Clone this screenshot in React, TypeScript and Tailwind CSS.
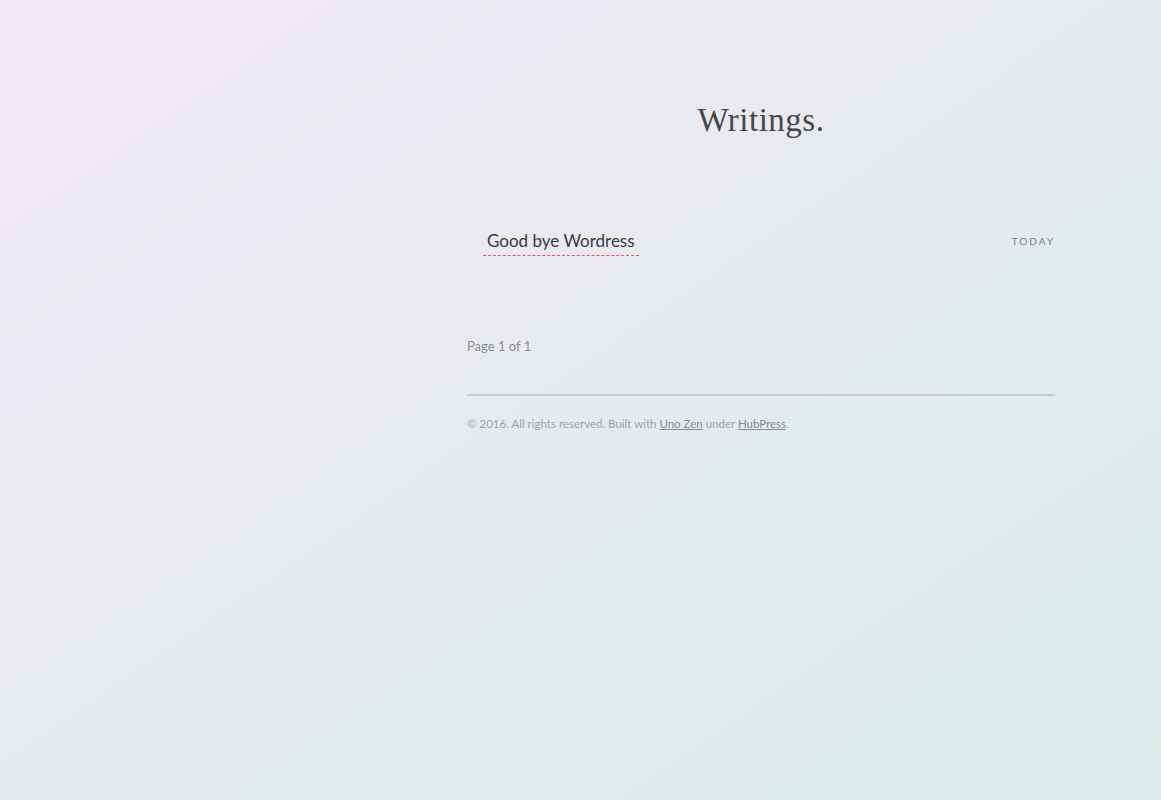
export default function App() {
  return (
    <div
      className="min-h-[800px] w-full bg-gradient-to-br from-[#f1e9f5] via-[#e6eaee] to-[#d9ebe8]"
      style={{ fontFamily: "Lato, 'Open Sans', sans-serif" }}
    >
      <div className="flex">
        {/* left side is empty */}
        <div className="w-[467px] shrink-0" />

        <main className="w-[588px] shrink-0">
          <header className="pt-[100px] pb-[90px] text-center">
            <h1
              className="text-[33px] font-normal leading-[40px] tracking-[0.5px] text-[#46464b]"
              style={{ fontFamily: "'Liberation Serif', serif" }}
            >
              Writings.
            </h1>
          </header>

          <ul>
            <li className="flex items-center justify-between">
              <a
                href="#"
                className="ml-4 border-b border-dashed border-b-[#e5535c] px-1 pb-[3px] text-[17px] leading-[22px] text-[#3a3a3f]"
              >
                Good bye Wordress
              </a>
              <span className="-mt-[3px] text-[10px] tracking-[2px] text-[#7a7d80]">TODAY</span>
            </li>
          </ul>

          <div className="mt-[81px] text-[13px] text-[#8b8d90]">Page 1 of 1</div>

          <footer className="mt-[37px] border-t-2 border-[#c6ccce] pt-[19px] text-[11.5px] text-[#9ea2a5]">
            © 2016. All rights reserved. Built with{" "}
            <a href="#" className="text-[#878b8e] underline">
              Uno Zen
            </a>{" "}
            under{" "}
            <a href="#" className="text-[#878b8e] underline">
              HubPress
            </a>
            .
          </footer>
        </main>
      </div>
    </div>
  )
}
